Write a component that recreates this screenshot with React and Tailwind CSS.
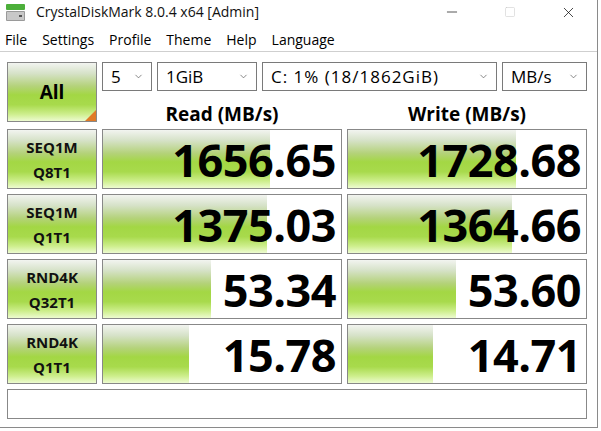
import { ChevronDown, Minus, Square, X } from "lucide-react";

const rows = [
  { a: "SEQ1M", b: "Q8T1", read: "1656.65", readW: 167, write: "1728.68", writeW: 168 },
  { a: "SEQ1M", b: "Q1T1", read: "1375.03", readW: 164, write: "1364.66", writeW: 164 },
  { a: "RND4K", b: "Q32T1", read: "53.34", readW: 108, write: "53.60", writeW: 108 },
  { a: "RND4K", b: "Q1T1", read: "15.78", readW: 86, write: "14.71", writeW: 85 },
];

const green =
  "bg-[linear-gradient(to_bottom,#f2f4f0_0%,#d6e2c8_18%,#b4d27a_40%,#a3d744_55%,#a8da4c_72%,#cdee8c_88%,#edfbd0_100%)]";

function Select({ value, className, textClass = "" }) {
  return (
    <div className={`flex h-[29px] items-center justify-between border border-[#7a7a7a] bg-white pl-[8px] pr-[7px] ${className}`}>
      <span className={`text-[17px] leading-none text-black ${textClass}`}>{value}</span>
      <ChevronDown size={11} strokeWidth={1.5} className="text-[#555]" />
    </div>
  );
}

function Result({ value, width }) {
  return (
    <div className="relative h-[60px] w-[240px] border border-[#888] bg-white">
      <div className={`absolute left-0 top-0 h-full ${green}`} style={{ width }} />
      <div className="relative flex h-full items-center justify-end pr-[5px] text-[45px] font-bold leading-none tracking-[-0.5px] text-black">
        {value}
      </div>
    </div>
  );
}

export default function App() {
  return (
    <div className="h-[431px] w-[601px] overflow-hidden bg-white font-['Open_Sans','Noto_Sans',sans-serif] text-black">
      <div className="h-[428px] w-[598px] border-r border-b border-[#8a8a8a]">
        {/* title bar */}
        <div className="flex h-[24px] items-center">
          <svg width="19" height="17" viewBox="0 0 19 17" className="ml-[6px]">
            <rect x="0" y="0" width="19" height="6" rx="1" fill="#4caf3a" />
            <rect x="0" y="7" width="19" height="10" rx="1" fill="#9a9a9a" />
            <rect x="1" y="8" width="17" height="8" fill="#c8c8c8" />
            <rect x="13" y="11" width="3" height="2" fill="#555" />
          </svg>
          <span className="ml-[11px] text-[14px] leading-none text-[#111]">CrystalDiskMark 8.0.4 x64 [Admin]</span>
          <div className="ml-auto flex items-center">
            <div className="flex w-[58px] justify-center">
              <Minus size={16} strokeWidth={1} />
            </div>
            <div className="flex w-[58px] justify-center">
              <Square size={12} strokeWidth={1} className="text-[#c4c4c4]" />
            </div>
            <div className="flex w-[58px] justify-center">
              <X size={17} strokeWidth={1} />
            </div>
          </div>
        </div>
        {/* menu */}
        <div className="flex h-[28px] items-center gap-[15px] border-b border-[#cfcfcf] pl-[5px] pt-[5px] text-[14px] leading-none">
          <span>File</span>
          <span>Settings</span>
          <span>Profile</span>
          <span>Theme</span>
          <span>Help</span>
          <span>Language</span>
        </div>
        {/* body */}
        <div className="px-[7px] pt-[10px]">
          <div className="flex gap-[5px]">
            <div className={`relative flex h-[60px] w-[90px] items-center justify-center border border-[#888] ${green}`}>
              <span className="text-[19px] font-bold">All</span>
              <div className="absolute bottom-0 right-0 h-0 w-0 border-b-[11px] border-l-[11px] border-b-[#e07a26] border-l-transparent" />
            </div>
            <div className="flex flex-col">
              <div className="flex gap-[5px]">
                <Select value="5" className="w-[50px]" />
                <Select value="1GiB" className="w-[100px]" />
                <Select value="C: 1% (18/1862GiB)" className="w-[235px]" textClass="tracking-[1px]" />
                <Select value="MB/s" className="w-[85px]" />
              </div>
              <div className="flex">
                <div className="w-[240px] pt-[14px] text-center text-[19px] font-bold leading-none">Read (MB/s)</div>
                <div className="ml-[5px] w-[240px] pt-[14px] text-center text-[19px] font-bold leading-none">Write (MB/s)</div>
              </div>
            </div>
          </div>
          <div className="mt-[5px] flex flex-col gap-[5px]">
            {rows.map((r, i) => (
              <div key={i} className="flex gap-[5px]">
                <div className={`flex h-[60px] w-[90px] flex-col items-center justify-center gap-[3px] border border-[#888] text-[15px] font-bold leading-[22px] text-[#111] ${green}`}>
                  <span>{r.a}</span>
                  <span>{r.b}</span>
                </div>
                <Result value={r.read} width={r.readW} />
                <Result value={r.write} width={r.writeW} />
              </div>
            ))}
          </div>
          <div className="mt-[5px] h-[30px] w-[580px] border border-[#888] bg-white" />
        </div>
      </div>
    </div>
  );
}
